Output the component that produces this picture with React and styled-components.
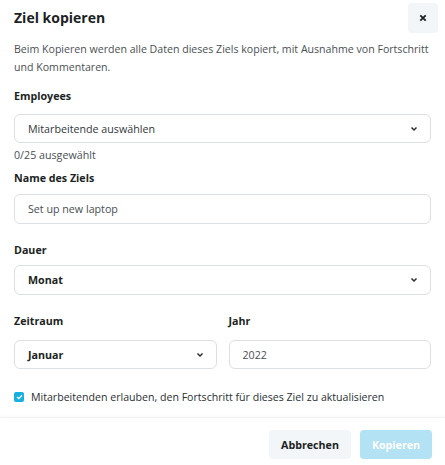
import React, { useState } from 'react';
import styled, { createGlobalStyle } from 'styled-components';

const GlobalStyle = createGlobalStyle`
  html, body {
    margin: 0;
    padding: 0;
    background: #fff;
  }
  body {
    font-family: "Open Sans", "DejaVu Sans", sans-serif;
    color: #1f2328;
  }
`;

const Modal = styled.div`
  width: 445px;
  height: 465px;
  display: flex;
  flex-direction: column;
  background: #fff;
  overflow: hidden;
`;

const Header = styled.div`
  display: flex;
  align-items: flex-start;
  justify-content: space-between;
  padding: 0 7px 0 14px;
  height: 36px;
`;

const Title = styled.h1`
  margin: 0;
  font-size: 14px;
  line-height: 36px;
  font-weight: 700;
  color: #1c1f23;
`;

const CloseButton = styled.button`
  width: 30px;
  height: 30px;
  margin-top: 3px;
  border: none;
  border-radius: 4px;
  background: #f3f6f9;
  display: flex;
  align-items: center;
  justify-content: center;
  padding: 0;
  cursor: pointer;
`;

const Body = styled.div`
  flex: 1;
  padding: 0 14px;
`;

const Description = styled.p`
  margin: 4px 0 0;
  font-size: 10.6px;
  line-height: 18px;
  color: #4b4f54;
`;

const Label = styled.div`
  font-size: 10.7px;
  font-weight: 700;
  color: #1c1f23;
  line-height: 16px;
  margin-top: ${p => p.$top || 0}px;
  margin-bottom: ${p => p.$bottom || 0}px;
`;

const SelectBox = styled.div`
  height: ${p => p.$h || 30}px;
  box-sizing: border-box;
  border: 1px solid #dcdfe3;
  border-radius: 6px;
  display: flex;
  align-items: center;
  justify-content: space-between;
  padding: 0 12px 0 13px;
  font-size: 10.7px;
  font-weight: ${p => (p.$bold ? 700 : 400)};
  color: ${p => (p.$bold ? '#1c1f23' : '#33373c')};
`;

const TextInput = styled.input`
  display: block;
  width: 100%;
  height: ${p => p.$h || 30}px;
  box-sizing: border-box;
  border: 1px solid #dcdfe3;
  border-radius: 6px;
  padding: 0 13px;
  font-family: "Open Sans", sans-serif;
  font-size: 10.7px;
  color: #4a4e53;
  outline: none;
`;

const Hint = styled.div`
  font-size: 10.7px;
  color: #4b4f54;
  margin-top: 4px;
  line-height: 16px;
`;

const Row = styled.div`
  display: grid;
  grid-template-columns: 1fr 1fr;
  column-gap: 12px;
  margin-top: 18px;
`;

const CheckRow = styled.label`
  display: flex;
  align-items: center;
  gap: 7px;
  margin-top: 20px;
  line-height: 16px;
  font-size: 10.6px;
  color: #2b2f34;
`;

const CheckBox = styled.span`
  width: 10px;
  height: 10px;
  border-radius: 2px;
  background: #17aee0;
  display: flex;
  align-items: center;
  justify-content: center;
`;

const Footer = styled.div`
  display: flex;
  justify-content: flex-end;
  align-items: flex-start;
  gap: 9px;
  padding: 12px 13px 0;
  height: 48px;
  box-sizing: border-box;
  border-top: 1px solid #f2f3f5;
  box-shadow: 0 -1px 2px rgba(0, 0, 0, 0.03);
`;

const Button = styled.button`
  height: 29px;
  width: ${p => p.$w}px;
  border: none;
  border-radius: 4px;
  padding: 0;
  font-family: "Open Sans", sans-serif;
  font-size: 10.7px;
  font-weight: 700;
  background: ${p => (p.$primary ? '#b2e2f3' : '#f3f6f9')};
  color: ${p => (p.$primary ? '#fff' : '#1c1f23')};
`;

const Chevron = () => (
  <svg width="8" height="6" viewBox="0 0 8 6">
    <path d="M1.5 1.5 L4 4 L6.5 1.5" fill="none" stroke="#2a2e33" strokeWidth="1.5" />
  </svg>
);

const App = () => {
  const [name, setName] = useState('Set up new laptop');
  const [year, setYear] = useState('2022');

  return (
    <Modal>
      <GlobalStyle />
      <Header>
        <Title>Ziel kopieren</Title>
        <CloseButton aria-label="Schließen">
          <svg width="8" height="8" viewBox="0 0 8 8">
            <path d="M1.3 1.3 L6.7 6.7 M6.7 1.3 L1.3 6.7" stroke="#1c1f23" strokeWidth="1.8" />
          </svg>
        </CloseButton>
      </Header>
      <Body>
        <Description>
          Beim Kopieren werden alle Daten dieses Ziels kopiert, mit Ausnahme von Fortschritt und Kommentaren.
        </Description>

        <Label $top={12} $bottom={10}>Employees</Label>
        <SelectBox $h={29}>
          Mitarbeitende auswählen
          <Chevron />
        </SelectBox>
        <Hint>0/25 ausgewählt</Hint>

        <Label $top={7} $bottom={8}>Name des Ziels</Label>
        <TextInput value={name} onChange={e => setName(e.target.value)} />

        <Label $top={18} $bottom={7}>Dauer</Label>
        <SelectBox $bold>
          Monat
          <Chevron />
        </SelectBox>

        <Row>
          <div>
            <Label $bottom={11}>Zeitraum</Label>
            <SelectBox $bold $h={29}>
              Januar
              <Chevron />
            </SelectBox>
          </div>
          <div>
            <Label $bottom={11}>Jahr</Label>
            <TextInput $h={29} value={year} onChange={e => setYear(e.target.value)} />
          </div>
        </Row>

        <CheckRow>
          <CheckBox>
            <svg width="7" height="6" viewBox="0 0 7 6">
              <path d="M1 3 L2.8 4.6 L6 1.3" fill="none" stroke="#fff" strokeWidth="1.3" />
            </svg>
          </CheckBox>
          Mitarbeitenden erlauben, den Fortschritt für dieses Ziel zu aktualisieren
        </CheckRow>
      </Body>
      <Footer>
        <Button $w={82}>Abbrechen</Button>
        <Button $primary $w={72}>Kopieren</Button>
      </Footer>
    </Modal>
  );
};

export default App;
